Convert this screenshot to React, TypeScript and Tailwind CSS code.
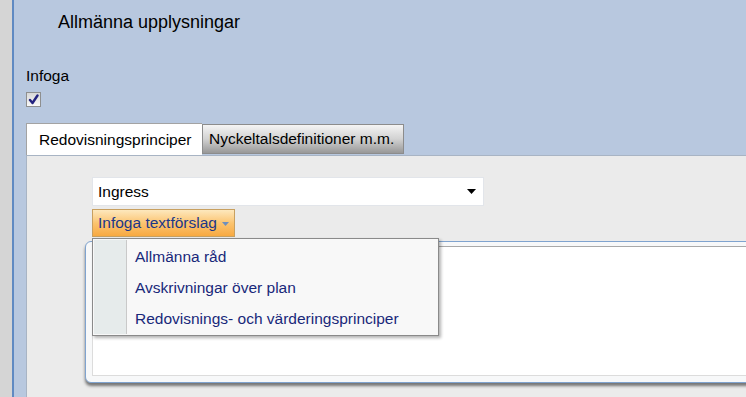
import React from "react";

const font = { fontFamily: '"Liberation Sans", Arial, sans-serif' };

function Checkbox() {
  return (
    <div className="w-[15px] h-[15px] border border-[#8e8f8f] bg-gradient-to-b from-[#d8d8d8] to-[#f8f8f8] flex items-center justify-center">
      <svg width="11" height="11" viewBox="0 0 11 11">
        <path d="M2 6 L4.5 9 L9.5 1.5" stroke="#23237f" strokeWidth="2.4" fill="none" strokeLinecap="round" strokeLinejoin="round" />
      </svg>
    </div>
  );
}

export default function App() {
  const items = ["Allmänna råd", "Avskrivningar över plan", "Redovisnings- och värderingsprinciper"];
  return (
    <div className="flex h-[397px] w-full overflow-hidden" style={font}>
      <div className="w-[12px] shrink-0 bg-[#d5d5d5]" />
      <div className="flex-1 min-w-0 border-l-2 border-[#608ac2] bg-[#b8c8df] flex flex-col pl-[12px]">
        <div className="pt-[11px] pl-[32px] text-[18px] leading-[22px] text-black">Allmänna upplysningar</div>
        <div className="mt-[34px] text-[15.5px] leading-[18px] text-black">Infoga</div>
        <div className="mt-[7px]">
          <Checkbox />
        </div>
        <div className="mt-[16px] flex items-start">
          <div className="w-[176px] h-[32px] bg-white border-t border-l border-[#a3a3a3] pl-[12px] text-[15.5px] leading-[31px] text-black">
            Redovisningsprinciper
          </div>
          <div className="mt-[1px] w-[202px] h-[30px] border border-[#8c8c8c] bg-gradient-to-b from-[#f4f4f4] via-[#d2d2d2] to-[#989898] pl-[6px] text-[15.5px] leading-[28px] text-black">
            Nyckeltalsdefinitioner m.m.
          </div>
        </div>
        <div className="flex-1 bg-[#ebebeb] border-t border-l border-[#a8b4c4] pl-[58px] pt-[21px]">
          <div className="ml-[7px] w-[392px] h-[29px] bg-white border border-[#e2e5ea] flex items-center justify-between pl-[5px] pr-[7px] text-[15.5px] text-black">
            <span className="leading-[18px]">Ingress</span>
            <svg width="9" height="5" viewBox="0 0 9 5">
              <path d="M0 0 H9 L4.5 5 Z" fill="#000" />
            </svg>
          </div>
          <div className="relative ml-[7px] mt-[3px] w-[143px] z-10">
            <div className="h-[28px] border border-[#c8a060] bg-gradient-to-b from-[#fde8bd] via-[#fbc46f] to-[#f8a940] flex items-center pl-[5px] text-[15.5px] text-[#1b3788]">
              <span className="leading-[18px]">Infoga textförslag</span>
              <svg className="ml-[5px] mt-[2px]" width="7" height="4" viewBox="0 0 7 4">
                <path d="M0 0 H7 L3.5 4 Z" fill="#6f8fbd" />
              </svg>
            </div>
            <div className="absolute left-0 top-full mt-[1px] w-[347px] border border-[#8a8a8a] bg-[#f8f8f8] shadow-[2px_2px_3px_rgba(0,0,0,0.3)] pt-[2px] pb-[1px]">
              <div className="absolute left-[1px] top-[1px] bottom-[1px] w-[33px] bg-[#e6ebeb] border-r border-[#c9c9c9]" />
              {items.map((t) => (
                <div key={t} className="relative h-[31px] pl-[42px] text-[15.5px] leading-[31px] text-[#18287a] whitespace-nowrap">
                  {t}
                </div>
              ))}
            </div>
          </div>
          <div className="mt-[4px] w-[700px] h-[142px] rounded-[6px] border border-[#7fa3cf] bg-[#f7f8f9] px-[6px] pt-[4px] pb-[6px] shadow-[0_3px_3px_rgba(0,0,0,0.5)]">
            <div className="h-full bg-white border border-[#dcdcdc] border-t-[#a9a9a9]" />
          </div>
        </div>
      </div>
    </div>
  );
}
